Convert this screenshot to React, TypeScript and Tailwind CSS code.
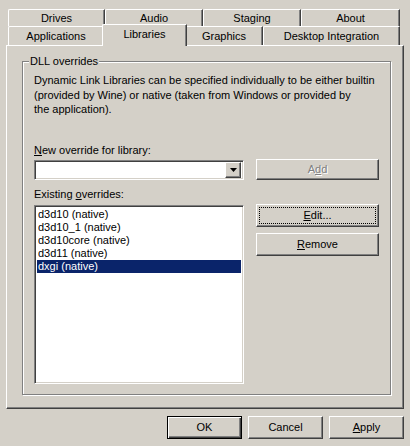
import React from "react";

const raised =
  "border border-t-white border-l-white border-r-[#404040] border-b-[#404040] shadow-[inset_-1px_-1px_0_#808080]";
const sunken =
  "border border-t-[#808080] border-l-[#808080] border-r-white border-b-white shadow-[inset_1px_1px_0_#404040,inset_-1px_-1px_0_#d4d0c8]";

const Tab: React.FC<{ label: string; w: string; active?: boolean }> = ({ label, w, active }) => {
  if (active) {
    return (
      <div
        className={`${w} relative z-10 -mx-[2px] -mb-[1px] h-[22px] flex items-start justify-center pt-[3px] bg-[#d4d0c8] border-t border-l border-t-white border-l-white border-r border-r-[#404040] shadow-[inset_-1px_0_0_#808080] rounded-tl-[2px]`}
      >
        {label}
      </div>
    );
  }
  return (
    <div
      className={`${w} h-full flex items-center justify-center border-t border-l border-t-white border-l-white border-r border-r-[#404040] shadow-[inset_-1px_0_0_#808080] rounded-tl-[2px]`}
    >
      {label}
    </div>
  );
};

const Button: React.FC<{
  children: React.ReactNode;
  className?: string;
  disabled?: boolean;
  focused?: boolean;
  isDefault?: boolean;
}> = ({ children, className = "", disabled, focused, isDefault }) => {
  const frame = isDefault
    ? "border border-black shadow-[inset_1px_1px_0_white,inset_-1px_-1px_0_#404040,inset_-2px_-2px_0_#808080]"
    : raised;
  return (
    <div className={`${frame} ${className} flex p-[2px]`}>
      <div
        className={`flex-1 flex items-center justify-center ${
          focused ? "border border-dotted border-black" : "border border-transparent"
        } ${disabled ? "text-[#808080] [text-shadow:1px_1px_0_white]" : ""}`}
      >
        {children}
      </div>
    </div>
  );
};

const items = ["d3d10 (native)", "d3d10_1 (native)", "d3d10core (native)", "d3d11 (native)", "dxgi (native)"];

export default function App() {
  return (
    <div className="w-[410px] h-[446px] bg-[#d4d0c8] font-['Liberation_Sans',Arial,sans-serif] text-[11px] leading-[13px] text-black pt-[9px] overflow-hidden select-none">
      <div className="ml-[8px] flex h-[17px]">
        <Tab label="Drives" w="w-[97px]" />
        <Tab label="Audio" w="w-[98px]" />
        <Tab label="Staging" w="w-[98px]" />
        <Tab label="About" w="w-[99px]" />
      </div>
      <div className="ml-[8px] flex items-end h-[19px]">
        <Tab label="Applications" w="w-[96px]" />
        <Tab label="Libraries" w="w-[85px]" active />
        <Tab label="Graphics" w="w-[78px]" />
        <Tab label="Desktop Integration" w="w-[137px]" />
      </div>

      <div className="ml-[6px] w-[398px] h-[364px] border border-t-white border-l-white border-r-[#404040] border-b-[#404040] shadow-[inset_-1px_-1px_0_#808080] pt-[9px] pl-[15px]">
        <fieldset className="w-[366px] h-[340px] border border-[#808080] shadow-[inset_1px_1px_0_white,1px_1px_0_white] px-[11px]">
          <legend className="-ml-[5px] px-[1px] bg-[#d4d0c8]">DLL overrides</legend>

          <p className="mt-[5px] leading-[14.5px] whitespace-nowrap">
            Dynamic Link Libraries can be specified individually to be either builtin
            <br />
            (provided by Wine) or native (taken from Windows or provided by
            <br />
            the application).
          </p>

          <div className="mt-[27px]">
            <span className="underline">N</span>ew override for library:
          </div>
          <div className="mt-[2px] flex gap-[12px]">
            <div className={`${sunken} mt-[1px] w-[210px] h-[20px] bg-white flex justify-end items-center p-[2px]`}>
              <div className={`${raised} w-[16px] h-[16px] bg-[#d4d0c8] flex items-center justify-center`}>
                <svg width="7" height="4" viewBox="0 0 7 4">
                  <path d="M0 0h7L3.5 4z" fill="black" />
                </svg>
              </div>
            </div>
            <Button className="w-[123px] h-[21px]" disabled>
              <span>
                A<span className="underline">d</span>d
              </span>
            </Button>
          </div>

          <div className="mt-[8px]">
            Existing <span className="underline">o</span>verrides:
          </div>
          <div className="mt-[3px] flex gap-[12px] items-start">
            <div className={`${sunken} mt-[1px] w-[210px] h-[179px] bg-white p-[2px]`}>
              {items.map((it, i) => (
                <div
                  key={it}
                  className={`h-[13px] pl-[1px] leading-[13px] ${
                    i === items.length - 1 ? "bg-[#0a246a] text-white" : ""
                  }`}
                >
                  {it}
                </div>
              ))}
            </div>
            <div className="flex flex-col gap-[6px]">
              <Button className="w-[123px] h-[23px]" focused>
                <span>
                  <span className="underline">E</span>dit...
                </span>
              </Button>
              <Button className="w-[123px] h-[23px]">
                <span>
                  <span className="underline">R</span>emove
                </span>
              </Button>
            </div>
          </div>
        </fieldset>
      </div>

      <div className="mt-[7px] pr-[6px] flex justify-end gap-[6px]">
        <Button className="w-[75px] h-[23px]" isDefault>
          OK
        </Button>
        <Button className="w-[75px] h-[23px]">Cancel</Button>
        <Button className="w-[75px] h-[23px]">
          <span>
            <span className="underline">A</span>pply
          </span>
        </Button>
      </div>
    </div>
  );
}
